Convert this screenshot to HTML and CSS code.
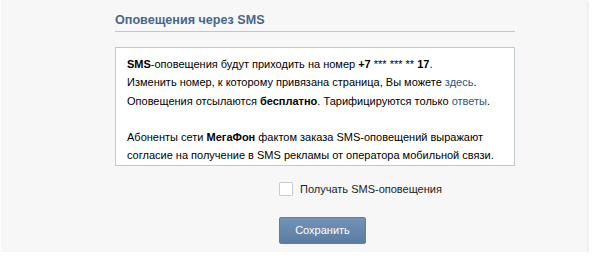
FILE: index.html
```html
<!DOCTYPE html>
<html lang="ru">
<head>
<meta charset="utf-8">
<link rel="stylesheet" href="styles.css">
</head>
<body>
<div class="panel">
  <div class="column">
    <div class="heading">Оповещения через SMS</div>
    <div class="info">
      <div><b>SMS</b>-оповещения будут приходить на номер <b>+7</b> *** *** ** <b>17</b>.</div>
      <div>Изменить номер, к которому привязана страница, Вы можете <a href="#">здесь</a>.</div>
      <div>Оповещения отсылаются <b>бесплатно</b>. Тарифицируются только <a href="#">ответы</a>.</div>
      <div class="gap"></div>
      <div>Абоненты сети <b>МегаФон</b> фактом заказа SMS-оповещений выражают</div>
      <div>согласие на получение в SMS рекламы от оператора мобильной связи.</div>
    </div>
    <div class="actions">
      <label class="check"><span class="box"></span><span>Получать SMS-оповещения</span></label>
      <button class="save">Сохранить</button>
    </div>
  </div>
</div>
</body>
</html>
```
FILE: styles.css
```css
html, body {
  margin: 0;
  padding: 0;
  background: #ffffff;
}
body {
  font-family: "Liberation Sans", Arial, sans-serif;
  font-size: 11px;
  color: #000;
}
.panel {
  margin-left: 1px;
  width: 586px;
  height: 252px;
  background: #f7f7f7;
  box-shadow: 1px 1px 2px rgba(0, 0, 0, 0.12);
}
.column {
  margin-left: 114px;
  width: 400px;
  padding-top: 12px;
}
.heading {
  font-size: 12.6px;
  font-weight: bold;
  color: #45688e;
  line-height: 16px;
  padding-bottom: 3px;
  border-bottom: 1px solid #bcc6d6;
}
.info {
  margin-top: 15px;
  background: #fff;
  border: 1px solid #c3c9d1;
  padding: 7px 11px 0;
  line-height: 18.3px;
}
.info b {
  font-weight: bold;
}
.info a {
  color: #2b587a;
  text-decoration: none;
}
.gap {
  height: 18.3px;
}
.actions {
  display: flex;
  flex-direction: column;
  align-items: flex-start;
  margin-left: 164px;
  padding-top: 16px;
}
.check {
  display: flex;
  align-items: center;
  gap: 7px;
  color: #222;
  line-height: 14px;
}
.box {
  width: 12px;
  height: 12px;
  border: 1px solid #c7ccd3;
  background: #fff;
  border-radius: 1px;
}
.save {
  margin-top: 21px;
  width: 87px;
  height: 27px;
  border: 1px solid #5d7fa5;
  border-radius: 2px;
  background: linear-gradient(#7393b7, #5b7ca2);
  color: #fff;
  font-family: "Liberation Sans", Arial, sans-serif;
  font-size: 11px;
  padding: 0;
}
```
